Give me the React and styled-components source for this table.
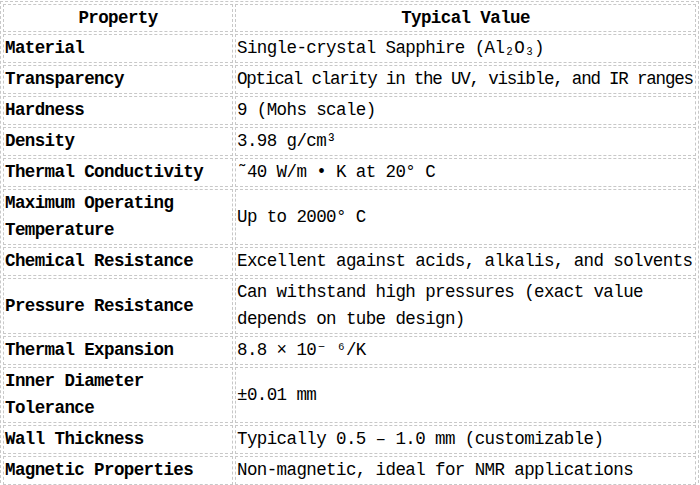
import React from "react";
import styled, { createGlobalStyle } from "styled-components";

const GlobalStyle = createGlobalStyle`
  html, body {
    margin: 0;
    padding: 0;
    background: #fff;
  }
`;

const Table = styled.table`
  width: 699px;
  margin-top: 1px;
  table-layout: fixed;
  border: 1px dashed #c8c8c8;
  border-spacing: 2px;
  font-family: "Liberation Mono", "DejaVu Sans Mono", monospace;
  font-size: 17.5px;
  letter-spacing: -0.6px;
  color: #000;
`;

const HeadCell = styled.th`
  border: 1px dashed #c8c8c8;
  padding: 0 1px;
  line-height: 26px;
  font-weight: 700;
  text-align: center;
`;

const Row = styled.tr`
  line-height: 27px;
`;

const Cell = styled.td`
  border: 1px dashed #c8c8c8;
  padding: 0 1px;
  vertical-align: middle;
  font-weight: ${(p) => (p.$label ? 700 : 400)};
  letter-spacing: ${(p) => (p.$tight ? "-1.2px" : "inherit")};
  white-space: ${(p) => (p.$tight ? "nowrap" : "normal")};
`;

const rows = [
  { label: "Material", value: "Single-crystal Sapphire (Al₂O₃)" },
  { label: "Transparency", value: "Optical clarity in the UV, visible, and IR ranges", tight: true },
  { label: "Hardness", value: "9 (Mohs scale)" },
  { label: "Density", value: "3.98 g/cm³" },
  { label: "Thermal Conductivity", value: "˜40 W/m • K at 20° C" },
  { label: "Maximum Operating Temperature", value: "Up to 2000° C" },
  { label: "Chemical Resistance", value: "Excellent against acids, alkalis, and solvents" },
  { label: "Pressure Resistance", value: "Can withstand high pressures (exact value depends on tube design)" },
  { label: "Thermal Expansion", value: "8.8 × 10⁻ ⁶/K" },
  { label: "Inner Diameter Tolerance", value: "±0.01 mm" },
  { label: "Wall Thickness", value: "Typically 0.5 – 1.0 mm (customizable)" },
  { label: "Magnetic Properties", value: "Non-magnetic, ideal for NMR applications" },
];

export default function App() {
  return (
    <>
      <GlobalStyle />
      <Table>
        <colgroup>
          <col style={{ width: "230px" }} />
          <col />
        </colgroup>
        <thead>
          <tr>
            <HeadCell>Property</HeadCell>
            <HeadCell>Typical Value</HeadCell>
          </tr>
        </thead>
        <tbody>
          {rows.map((r) => (
            <Row key={r.label}>
              <Cell $label>{r.label}</Cell>
              <Cell $tight={r.tight}>{r.value}</Cell>
            </Row>
          ))}
        </tbody>
      </Table>
    </>
  );
}
